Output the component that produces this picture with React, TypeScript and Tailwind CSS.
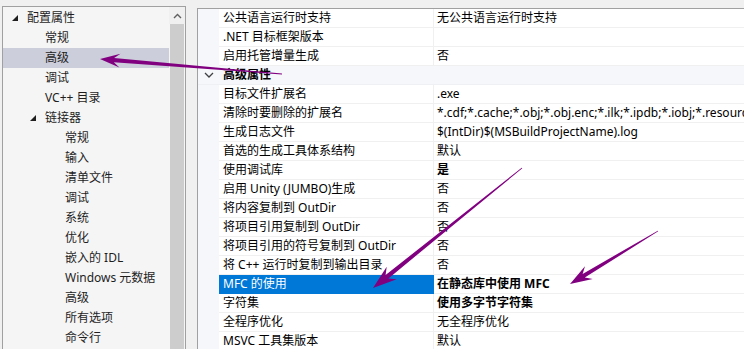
import React from 'react';

type TreeItem = { label: string; level: number; expander?: boolean; selected?: boolean };

const tree: TreeItem[] = [
  { label: '配置属性', level: 0, expander: true },
  { label: '常规', level: 1 },
  { label: '高级', level: 1, selected: true },
  { label: '调试', level: 1 },
  { label: 'VC++ 目录', level: 1 },
  { label: '链接器', level: 1, expander: true },
  { label: '常规', level: 2 },
  { label: '输入', level: 2 },
  { label: '清单文件', level: 2 },
  { label: '调试', level: 2 },
  { label: '系统', level: 2 },
  { label: '优化', level: 2 },
  { label: '嵌入的 IDL', level: 2 },
  { label: 'Windows 元数据', level: 2 },
  { label: '高级', level: 2 },
  { label: '所有选项', level: 2 },
  { label: '命令行', level: 2 },
];

type Row = { name: string; value?: string; bold?: boolean; header?: boolean; selected?: boolean };

const rows: Row[] = [
  { name: '公共语言运行时支持', value: '无公共语言运行时支持' },
  { name: '.NET 目标框架版本', value: '' },
  { name: '启用托管增量生成', value: '否' },
  { name: '高级属性', header: true },
  { name: '目标文件扩展名', value: '.exe' },
  {
    name: '清除时要删除的扩展名',
    value: '*.cdf;*.cache;*.obj;*.obj.enc;*.ilk;*.ipdb;*.iobj;*.resources;*.tlb;*.tli;*.tlh',
  },
  { name: '生成日志文件', value: '$(IntDir)$(MSBuildProjectName).log' },
  { name: '首选的生成工具体系结构', value: '默认' },
  { name: '使用调试库', value: '是', bold: true },
  { name: '启用 Unity (JUMBO)生成', value: '否' },
  { name: '将内容复制到 OutDir', value: '否' },
  { name: '将项目引用复制到 OutDir', value: '否' },
  { name: '将项目引用的符号复制到 OutDir', value: '否' },
  { name: '将 C++ 运行时复制到输出目录', value: '否' },
  { name: 'MFC 的使用', value: '在静态库中使用 MFC', bold: true, selected: true },
  { name: '字符集', value: '使用多字节字符集', bold: true },
  { name: '全程序优化', value: '无全程序优化' },
  { name: 'MSVC 工具集版本', value: '默认' },
];

// tapered arrow with a barbed head, tail -> tip
function arrowPoints(tx: number, ty: number, px: number, py: number, L: number, W: number) {
  const len = Math.hypot(px - tx, py - ty);
  const dx = (px - tx) / len;
  const dy = (py - ty) / len;
  const nx = -dy;
  const ny = dx;
  const bx = px - dx * L;
  const by = py - dy * L;
  const ix = px - dx * (L - 6);
  const iy = py - dy * (L - 6);
  const pts = [
    [tx + nx * 0.4, ty + ny * 0.4],
    [ix + nx * 2.2, iy + ny * 2.2],
    [bx + nx * W, by + ny * W],
    [px, py],
    [bx - nx * W, by - ny * W],
    [ix - nx * 2.2, iy - ny * 2.2],
    [tx - nx * 0.4, ty - ny * 0.4],
  ];
  return pts.map((p) => `${p[0].toFixed(1)},${p[1].toFixed(1)}`).join(' ');
}

export default function App() {
  return (
    <div className="relative w-[744px] h-[349px] overflow-hidden bg-[#f0f0f0] flex items-start text-[12px] leading-none text-black font-['Noto_Sans','Noto_Sans_CJK_SC',sans-serif]">
      {/* Left tree panel */}
      <div className="ml-[2px] mt-[6px] w-[184px] h-[360px] shrink-0 flex border-l border-t border-r border-[#a0a0a0] bg-[#f5f5f5]">
        <div className="w-[166px] pt-[1px]">
          {tree.map((item, i) => (
            <div
              key={i}
              className={`h-[20px] flex items-center ${item.selected ? 'bg-[#cccedb]' : ''} ${
                item.level === 0 ? 'pl-[7px]' : item.level === 1 ? 'pl-[25px]' : 'pl-[59px]'
              }`}
            >
              {item.level === 1 && !item.expander && <span className="w-[14px]" />}
              {item.expander && (
                <svg width="14" height="20" viewBox="0 0 14 20" className="shrink-0">
                  <polygon points="8,7 8,13 2,13" fill="#1e1e1e" />
                </svg>
              )}
              <span className="pl-[3px] text-[#1e1e1e] whitespace-nowrap">{item.label}</span>
            </div>
          ))}
        </div>
        {/* scrollbar */}
        <div className="w-[16px] flex flex-col">
          <div className="h-[17px] bg-[#f0f0f0] flex items-center justify-center">
            <svg width="9" height="6" viewBox="0 0 9 6">
              <polyline points="1,5 4.5,1.5 8,5" fill="none" stroke="#606060" strokeWidth="1.4" />
            </svg>
          </div>
          <div className="flex-1 mx-[1px] bg-[#cdcdcd]" />
        </div>
      </div>

      {/* Right property grid */}
      <div className="ml-[11px] mt-[8px] flex-1 h-[360px] border-l border-t border-[#a0a0a0] bg-white">
        {rows.map((row, i) =>
          row.header ? (
            <div key={i} className="h-[19px] flex bg-[#f5f7fb] border-b border-[#eef0f4]">
              <div className="w-[21px] flex items-center justify-center">
                <svg width="10" height="6" viewBox="0 0 10 6">
                  <polyline points="1,1 5,5 9,1" fill="none" stroke="#404040" strokeWidth="1.3" />
                </svg>
              </div>
              <div className="pl-[4px] flex items-center font-bold whitespace-nowrap">{row.name}</div>
            </div>
          ) : (
            <div key={i} className="h-[19px] flex">
              <div className="w-[21px] shrink-0 bg-[#f5f7fb]" />
              <div
                className={`w-[215px] shrink-0 pl-[4px] flex items-center whitespace-nowrap border-b border-r ${
                  row.selected ? 'bg-[#0078d7] text-white border-[#0078d7]' : 'border-[#f0f0f0]'
                }`}
              >
                {row.name}
              </div>
              <div className="flex-1 min-w-0 pl-[3px] flex items-center border-b border-[#f0f0f0] overflow-hidden">
                <span className={`whitespace-nowrap ${row.bold ? 'font-bold' : ''}`}>{row.value}</span>
                {row.selected && (
                  <div className="ml-auto w-[16px] h-[17px] shrink-0 flex items-center justify-center bg-[#e1e1e1] border border-[#adadad]">
                    <svg width="9" height="5" viewBox="0 0 9 5">
                      <polyline points="1,1 4.5,4 8,1" fill="none" stroke="#404040" strokeWidth="1.1" />
                    </svg>
                  </div>
                )}
              </div>
            </div>
          )
        )}
      </div>

      {/* annotation arrows */}
      <svg className="absolute inset-0 pointer-events-none" width="744" height="349" viewBox="0 0 744 349">
        <polygon points={arrowPoints(282, 74, 100, 59, 20, 7)} fill="#800080" />
        <polygon points={arrowPoints(522, 168, 373, 288, 24, 8)} fill="#800080" />
        <polygon points={arrowPoints(658, 231, 570, 284, 22, 7.5)} fill="#800080" />
      </svg>
    </div>
  );
}
